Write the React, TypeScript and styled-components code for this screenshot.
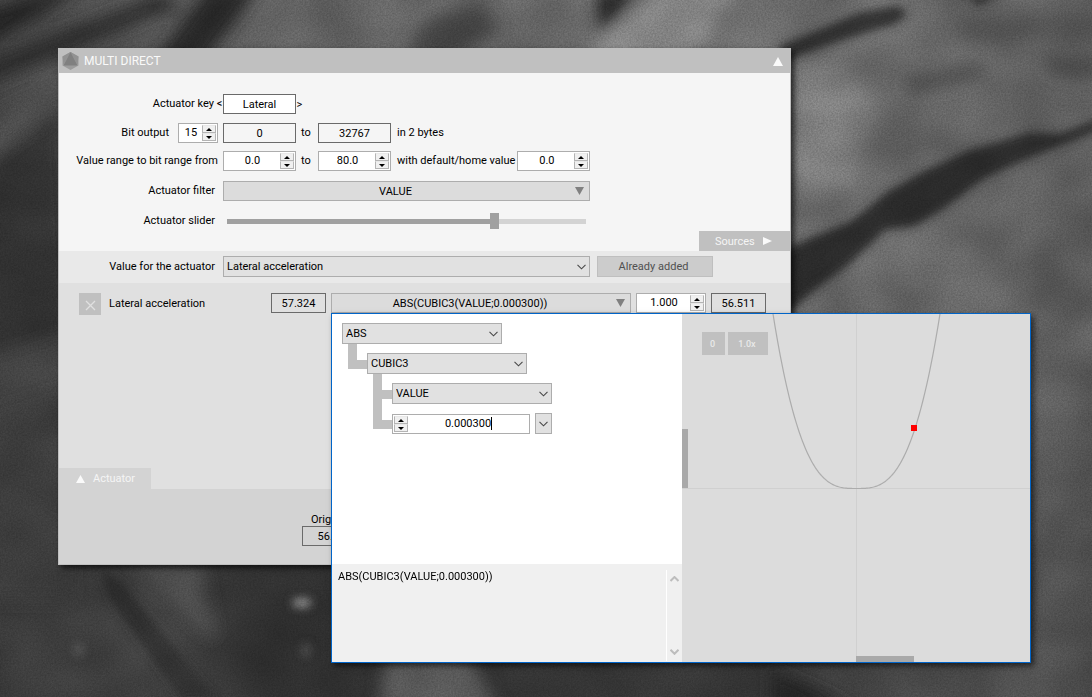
import React, { useState } from "react";
import styled, { createGlobalStyle } from "styled-components";

const color = {
  bar: "#c0c0c0",
  panel: "#f5f5f5",
  strip: "#e9e9e9",
  list: "#e0e0e0",
  footer: "#d3d3d3",
  control: "#dcdcdc",
  select: "#e1e1e1",
  line: "#adadad",
  dark: "#6a6a6a",
  focus: "#0064c8",
};

const Global = createGlobalStyle`
  *, *::before, *::after { box-sizing: border-box; }
  body { margin: 0; background: #464646; }
  body, button, input, select, textarea {
    font-family: Roboto, "Liberation Sans", sans-serif;
    font-size: 11px;
    color: #000;
  }
  button, input, select, textarea { margin: 0; padding: 0; border-radius: 0; outline: none; }
`;

/* ---------- desktop ---------- */

const Desktop = styled.main`
  position: relative;
  min-height: 100vh;
  overflow: hidden;
`;

const WallpaperSvg = styled.svg`
  position: absolute;
  inset: 0;
  width: 100%;
  height: 100%;
`;

const Texture = styled.rect`
  mix-blend-mode: overlay;
`;

/* ---------- main window ---------- */

const Window = styled.section`
  position: absolute;
  left: 58px;
  top: 48px;
  width: 733px;
  display: flex;
  flex-direction: column;
  border: 1px solid ${color.bar};
  box-shadow: 3px 3px 6px rgba(0, 0, 0, 0.7);
`;

const TitleBar = styled.header`
  display: flex;
  align-items: center;
  gap: 5px;
  height: 24px;
  padding: 0 7px 0 3px;
  background: ${color.bar};
`;

const Title = styled.h1`
  flex: 1;
  margin: 0;
  font-size: 12px;
  font-weight: 400;
  color: #fafafa;
`;

const PlainButton = styled.button`
  display: flex;
  border: 0;
  background: none;
`;

const Settings = styled.div`
  display: flex;
  flex-direction: column;
  padding-top: 21px;
  background: ${color.panel};
`;

const Row = styled.div<{ $gap?: number }>`
  display: flex;
  align-items: center;
  height: 20px;
  margin-bottom: ${(p) => p.$gap ?? 0}px;
`;

const LabelCell = styled.div<{ $end?: number }>`
  display: flex;
  justify-content: flex-end;
  align-items: center;
  width: 164px;
  padding-right: ${(p) => p.$end ?? 8}px;
  line-height: 18px;
  white-space: nowrap;
`;

const BitLabel = styled.label`
  padding-right: 9px;
`;

const Bracket = styled.span`
  width: 7px;
  text-align: center;
`;

const After = styled.span`
  padding: 0 2px 0 6px;
  line-height: 18px;
  white-space: nowrap;
`;

const To = styled.span`
  width: 22px;
  padding-left: 5px;
  line-height: 18px;
`;

const KeyInput = styled.input`
  width: 73px;
  height: 20px;
  border: 1px solid ${color.dark};
  background: #fff;
  text-align: center;
`;

const Readout = styled.output<{ $width: number }>`
  flex: none;
  width: ${(p) => p.$width}px;
  height: 20px;
  border: 1px solid ${color.dark};
  line-height: 20px;
  text-align: center;
`;

const SpinBox = styled.div<{ $width: number; $reverse?: boolean }>`
  position: relative;
  flex: none;
  display: flex;
  flex-direction: ${(p) => (p.$reverse ? "row-reverse" : "row")};
  width: ${(p) => p.$width}px;
  height: 20px;
  padding: 1px;
  border: 1px solid ${color.line};
  background: #fff;
`;

const SpinInput = styled.input`
  flex: 1;
  min-width: 0;
  height: 15px;
  border: 0;
  background: none;
  text-align: center;
`;

const SpinButtons = styled.div`
  display: flex;
  flex-direction: column;
  width: 14px;
`;

const SpinButton = styled.button`
  display: flex;
  align-items: center;
  justify-content: center;
  height: 8px;
  border: 1px solid #b4b4b4;
  border-top-color: #e8e8e8;
  background: #f0f0f0;
`;

const Caret = styled.span`
  position: absolute;
  left: 98px;
  top: 2px;
  width: 1px;
  height: 13px;
  background: #000;
`;

const FilterButton = styled.button<{ $width: number }>`
  flex: none;
  display: flex;
  align-items: center;
  gap: 8px;
  width: ${(p) => p.$width}px;
  height: 20px;
  padding-right: 5px;
  border: 1px solid ${color.line};
  background: ${color.control};
`;

const FilterText = styled.span`
  flex: 1;
  padding-top: 2px;
  text-align: center;
  line-height: 18px;
`;

const Slider = styled.input<{ $fill: number }>`
  appearance: none;
  width: 359px;
  height: 16px;
  margin-left: 4px;
  background: none;

  &::-webkit-slider-runnable-track {
    height: 5px;
    background: linear-gradient(
      to right,
      #a0a0a0 ${(p) => p.$fill}%,
      #d3d3d3 ${(p) => p.$fill}%
    );
  }

  &::-webkit-slider-thumb {
    appearance: none;
    width: 9px;
    height: 16px;
    margin-top: -6px;
    background: #a0a0a0;
  }
`;

const SourcesTab = styled.button`
  display: flex;
  align-items: center;
  justify-content: space-between;
  align-self: flex-end;
  width: 91px;
  height: 20px;
  padding: 0 18px 0 16px;
  border: 0;
  background: ${color.bar};
  color: #f5f5f5;
`;

const ValueStrip = styled.div`
  display: flex;
  align-items: center;
  height: 32px;
  padding-bottom: 1px;
  background: ${color.strip};
`;

const SelectWrap = styled.div<{ $width: number }>`
  position: relative;
  flex: none;
  width: ${(p) => p.$width}px;
  height: 21px;

  svg {
    position: absolute;
    right: 4px;
    top: 8px;
    pointer-events: none;
  }
`;

const SelectControl = styled.select`
  appearance: none;
  display: block;
  width: 100%;
  height: 100%;
  padding: 0 20px 0 3px;
  border: 1px solid ${color.line};
  background: ${color.select};
`;

const AddButton = styled.button`
  width: 116px;
  height: 21px;
  margin-left: 7px;
  padding-right: 3px;
  border: 1px solid #bfbfbf;
  background: #cccccc;
  color: #505050;
`;

const SourceList = styled.div`
  display: flex;
  flex-direction: column;
  padding-top: 10px;
  background: ${color.list};
`;

const SourceRow = styled.div`
  display: flex;
  align-items: flex-start;
  gap: 5px;
  height: 175px;
  padding-left: 20px;
`;

const RemoveButton = styled.button`
  display: flex;
  align-items: center;
  justify-content: center;
  width: 22px;
  height: 22px;
  padding-top: 2px;
  border: 0;
  background: ${color.bar};
`;

const SourceName = styled.span`
  width: 160px;
  padding-left: 3px;
  line-height: 22px;
`;

const ActuatorTab = styled.button`
  display: flex;
  align-items: center;
  gap: 8px;
  width: 92px;
  height: 21px;
  padding-left: 17px;
  border: 0;
  background: ${color.footer};
  color: #f5f5f5;
`;

const Footer = styled.footer`
  display: flex;
  height: 75px;
  padding: 24px 0 0 243px;
  background: ${color.footer};
`;

const FooterField = styled.label`
  display: flex;
  flex-direction: column;
  line-height: 13px;
`;

const FooterCaption = styled.span`
  padding-left: 9px;
`;

/* ---------- formula editor ---------- */

const Editor = styled.section`
  position: absolute;
  left: 331px;
  top: 313px;
  width: 700px;
  display: flex;
  border: 1px solid ${color.focus};
  box-shadow: 3px 3px 6px rgba(0, 0, 0, 0.6);
`;

const Formula = styled.div`
  flex: 1;
  display: flex;
  flex-direction: column;
  background: #fff;
`;

const Tree = styled.div`
  flex: 1;
  padding: 9px 10px;
`;

const Branch = styled.div`
  padding-left: 25px;
`;

const TreeRow = styled.div`
  display: flex;
  align-items: flex-end;
  height: 30px;
  margin-left: -19px;
`;

const Elbow = styled.span<{ $open?: boolean }>`
  width: 19px;
  height: 30px;
  background:
    linear-gradient(${color.bar}, ${color.bar}) 0 16px / 19px 9px no-repeat,
    linear-gradient(${color.bar}, ${color.bar}) 0 0 / 9px ${(p) => (p.$open ? 30 : 25)}px no-repeat;
`;

const DropButton = styled.button`
  display: flex;
  align-items: center;
  justify-content: center;
  width: 17px;
  height: 21px;
  margin-left: 5px;
  border: 1px solid ${color.line};
  background: ${color.select};
`;

const Expression = styled.div`
  display: flex;
  height: 98px;
  padding: 6px 0 1px;
  background: #f0f0f0;
`;

const ExpressionText = styled.textarea`
  flex: 1;
  padding: 0 6px;
  border: 0;
  background: none;
  line-height: 14px;
  resize: none;
  overflow: hidden;
`;

const ScrollRail = styled.div`
  display: flex;
  flex-direction: column;
  justify-content: space-between;
  align-items: center;
  width: 16px;
  padding: 6px 0 6px;
  border-left: 1px solid #fff;
`;

const Plot = styled.div`
  position: relative;
  width: 348px;
  height: 348px;
  background: ${color.control};
`;

const PlotButtons = styled.div`
  position: absolute;
  left: 20px;
  top: 18px;
  display: flex;
  gap: 3px;
`;

const PlotButton = styled.button<{ $width: number }>`
  width: ${(p) => p.$width}px;
  height: 23px;
  padding-right: 2px;
  border: 0;
  background: ${color.bar};
  color: #e9e9e9;
  font-size: 9px;
  font-weight: 500;
`;

/* ---------- drawings ---------- */

type Direction = "up" | "down" | "left" | "right";

function Triangle({ dir, w, h, fill }: { dir: Direction; w: number; h: number; fill: string }) {
  const points = {
    up: `0,${h} ${w / 2},0 ${w},${h}`,
    down: `0,0 ${w},0 ${w / 2},${h}`,
    left: `${w},0 ${w},${h} 0,${h / 2}`,
    right: `0,0 ${w},${h / 2} 0,${h}`,
  }[dir];
  return (
    <svg width={w} height={h} aria-hidden="true">
      <polygon points={points} fill={fill} />
    </svg>
  );
}

function Chevron({ up, stroke = "#484848", width = 1.1 }: { up?: boolean; stroke?: string; width?: number }) {
  return (
    <svg width="9" height="6" viewBox="0 0 9 6" aria-hidden="true">
      <path
        d={up ? "M0.5 5L4.5 1L8.5 5" : "M0.5 0.8L4.5 4.8L8.5 0.8"}
        fill="none"
        stroke={stroke}
        strokeWidth={width}
      />
    </svg>
  );
}

function Logo() {
  return (
    <svg width="17" height="18" viewBox="0 0 17 18" aria-hidden="true">
      <polygon points="8.5,0 16.5,4.5 16.5,13.5 8.5,18 0.5,13.5 0.5,4.5" fill="#9c9c9c" />
      <polygon points="8.5,0 16.5,4.5 15.5,13" fill="#929292" />
      <polygon points="8.5,0 0.5,4.5 1.5,13" fill="#929292" />
      <polygon points="8.5,0 15.5,13.5 1.5,13.5" fill="#808080" />
    </svg>
  );
}

function Wallpaper() {
  return (
    <WallpaperSvg viewBox="0 0 1092 697" preserveAspectRatio="xMidYMid slice" aria-hidden="true">
      <defs>
        <linearGradient id="top" x1="0" y1="0" x2="1" y2="0">
          <stop offset="0" stopColor="#484848" />
          <stop offset="0.25" stopColor="#626262" />
          <stop offset="0.6" stopColor="#6a6a6a" />
          <stop offset="0.78" stopColor="#6a6a6a" />
          <stop offset="1" stopColor="#5e5e5e" />
        </linearGradient>
        <linearGradient id="low" x1="0" y1="0" x2="1" y2="0">
          <stop offset="0" stopColor="#383838" />
          <stop offset="0.13" stopColor="#424242" />
          <stop offset="0.26" stopColor="#2e2e2e" />
          <stop offset="0.7" stopColor="#383838" />
          <stop offset="0.95" stopColor="#505050" />
          <stop offset="1" stopColor="#4c4c4c" />
        </linearGradient>
        <linearGradient id="fade" x1="0" y1="0" x2="0" y2="1">
          <stop offset="0.5" stopColor="#fff" stopOpacity="0" />
          <stop offset="0.82" stopColor="#fff" stopOpacity="1" />
        </linearGradient>
        <mask id="lower">
          <rect width="1092" height="697" fill="url(#fade)" />
        </mask>
        <filter id="soft" x="-30%" y="-30%" width="160%" height="160%">
          <feGaussianBlur stdDeviation="8" />
        </filter>
        <filter id="edge" x="-30%" y="-30%" width="160%" height="160%">
          <feGaussianBlur stdDeviation="4" />
        </filter>
        <filter id="grain" x="0" y="0" width="100%" height="100%" colorInterpolationFilters="sRGB">
          <feTurbulence type="fractalNoise" baseFrequency="0.6" numOctaves="2" seed="4" />
          <feColorMatrix values="1 0 0 0 0  1 0 0 0 0  1 0 0 0 0  0 0 0 0 1" />
        </filter>
        <filter id="cloud" x="0" y="0" width="100%" height="100%" colorInterpolationFilters="sRGB">
          <feTurbulence type="fractalNoise" baseFrequency="0.014 0.018" numOctaves="2" seed="9" />
          <feColorMatrix values="1.6 0 0 0 -0.3  1.6 0 0 0 -0.3  1.6 0 0 0 -0.3  0 0 0 0 1" />
        </filter>
      </defs>
      <rect width="1092" height="697" fill="url(#top)" />
      <rect width="1092" height="697" fill="url(#low)" mask="url(#lower)" />
      <g filter="url(#soft)">
        <path d="M-20 90L-20 62L160 -5L180 5Z" fill="#2a2a2a" />
        <path d="M-20 50L-20 15L50 -10L80 -10Z" fill="#282828" />
        <path d="M140 80L210 -15L262 -15L190 80Z" fill="#262626" />
        <path d="M-20 120L58 90L70 330L-20 360Z" fill="#2c2c2c" opacity="0.8" />
        <path d="M-20 130L60 85V110L-20 165Z" fill="#5a5a5a" opacity="0.7" />
        <path d="M-20 360L70 330V410L-20 430Z" fill="#404040" opacity="0.8" />
        <path d="M-20 410L70 380V600H-20Z" fill="#3c3c3c" />
        <path d="M400 60L430 15L480 5L500 30L450 60Z" fill="#444" />
        <path d="M595 -10H640L600 35Z" fill="#242424" />
        <path d="M570 70L660 -10H735L690 70Z" fill="#888" />
        <path d="M790 60L840 60L880 110L850 190L790 200Z" fill="#7a7a7a" />
        <path d="M905 80L980 65L990 75L910 95Z" fill="#4a4a4a" />
        <path d="M960 15H1100V30L960 42Z" fill="#525252" />
        <path d="M1045 58L1100 56V78L1050 74Z" fill="#444" />
        <path d="M1040 190L1100 150V330L1030 310Z" fill="#585858" />
        <path d="M385 650H465L500 710H380Z" fill="#585858" />
        <path d="M130 560H200L215 640L170 600Z" fill="#505050" />
        <path d="M770 668L820 690L860 710H770Z" fill="#262626" />
      </g>
      <g filter="url(#edge)">
        <path d="M780 46L860 12L898 6L908 14L895 24L850 38L780 62Z" fill="#2e2e2e" />
        <path d="M965 -8H1005L978 6Z" fill="#303030" />
        <path d="M780 252L810 238L850 222L890 190L930 168L970 150L1030 132L1060 134L1100 118V130L1060 146L1020 162L985 178L945 208L915 226L885 230L850 264L815 290L780 320Z" fill="#2b2b2b" />
        <path d="M100 570L120 580L215 697H180L110 600Z" fill="#2e2e2e" />
        <ellipse cx="302" cy="603" rx="10" ry="5" fill="#8a8a8a" />
        <ellipse cx="306" cy="650" rx="5" ry="7" fill="#4a4a4a" />
        <ellipse cx="79" cy="650" rx="5" ry="6" fill="#585858" />
      </g>
      <Texture width="1092" height="697" filter="url(#cloud)" opacity="0.12" />
      <Texture width="1092" height="697" filter="url(#grain)" opacity="0.16" />
    </WallpaperSvg>
  );
}

const CENTER = 174;
const gain = 0.0003;
const curve = Array.from({ length: 173 }, (_, i) => i - 86)
  .map((x) => `${CENTER + x + 0.5},${CENTER + 0.5 - gain * Math.abs(x) ** 3}`)
  .join(" ");

function CurvePlot() {
  return (
    <svg width="348" height="348" viewBox="0 0 348 348" role="img" aria-label="Filter curve">
      <path d="M0 174.5H348M174.5 0V348" stroke="#d0d0d0" />
      <polyline points={curve} fill="none" stroke="#acacac" strokeWidth="1.2" />
      <path d="M0 115h6v59h-6zM174 342h58v6h-58z" fill="#a9a9a9" />
      <rect x="229" y="111" width="6" height="6" fill="#f00" />
    </svg>
  );
}

/* ---------- controls ---------- */

function Spinner({
  id,
  label,
  initial,
  width,
  reverse,
  caret,
}: {
  id: string;
  label?: string;
  initial: string;
  width: number;
  reverse?: boolean;
  caret?: boolean;
}) {
  const [value, setValue] = useState(initial);
  const digits = (initial.split(".")[1] ?? "").length;
  const step = (dir: number) => setValue((Number(value) + dir * 10 ** -digits).toFixed(digits));
  return (
    <SpinBox $width={width} $reverse={reverse}>
      <SpinInput id={id} aria-label={label} value={value} onChange={(e) => setValue(e.target.value)} />
      {caret && <Caret />}
      <SpinButtons>
        <SpinButton type="button" aria-label="Increase" onClick={() => step(1)}>
          <Triangle dir="up" w={6} h={3} fill="#000" />
        </SpinButton>
        <SpinButton type="button" aria-label="Decrease" onClick={() => step(-1)}>
          <Triangle dir="down" w={6} h={3} fill="#000" />
        </SpinButton>
      </SpinButtons>
    </SpinBox>
  );
}

function Select({ id, label, value, width }: { id?: string; label?: string; value: string; width: number }) {
  return (
    <SelectWrap $width={width}>
      <SelectControl id={id} aria-label={label} defaultValue={value}>
        <option>{value}</option>
      </SelectControl>
      <Chevron />
    </SelectWrap>
  );
}

function FilterPicker({ id, label, value, width }: { id?: string; label?: string; value: string; width: number }) {
  return (
    <FilterButton type="button" id={id} aria-label={label} $width={width}>
      <FilterText>{value}</FilterText>
      <Triangle dir="down" w={9} h={8} fill="#808080" />
    </FilterButton>
  );
}

/* ---------- page ---------- */

export default function App() {
  const [slider, setSlider] = useState(751);
  const [key, setKey] = useState("Lateral");
  const [expression, setExpression] = useState("ABS(CUBIC3(VALUE;0.000300))");

  return (
    <>
      <Global />
      <Desktop>
        <Wallpaper />

        <Window>
          <TitleBar>
            <Logo />
            <Title>MULTI DIRECT</Title>
            <PlainButton type="button" aria-label="Collapse">
              <Triangle dir="up" w={10} h={9} fill="#fafafa" />
            </PlainButton>
          </TitleBar>

          <Settings>
            <Row $gap={9}>
              <LabelCell $end={0}>
                <After as="label" htmlFor="key">Actuator key</After>
                <Bracket>&lt;</Bracket>
              </LabelCell>
              <KeyInput id="key" value={key} onChange={(e) => setKey(e.target.value)} />
              <Bracket>&gt;</Bracket>
            </Row>
            <Row $gap={8}>
              <LabelCell $end={5}>
                <BitLabel htmlFor="bits">Bit output</BitLabel>
                <Spinner id="bits" initial="15" width={40} />
              </LabelCell>
              <Readout $width={73}>0</Readout>
              <To>to</To>
              <Readout $width={73}>32767</Readout>
              <After>in 2 bytes</After>
            </Row>
            <Row $gap={10}>
              <LabelCell $end={5}>
                <label htmlFor="from">Value range to bit range from</label>
              </LabelCell>
              <Spinner id="from" initial="0.0" width={73} />
              <To as="label" htmlFor="until">to</To>
              <Spinner id="until" initial="80.0" width={73} />
              <After as="label" htmlFor="home">with default/home value</After>
              <Spinner id="home" initial="0.0" width={73} />
            </Row>
            <Row $gap={10}>
              <LabelCell>
                <label htmlFor="filter">Actuator filter</label>
              </LabelCell>
              <FilterPicker id="filter" value="VALUE" width={367} />
            </Row>
            <Row>
              <LabelCell>
                <label htmlFor="slider">Actuator slider</label>
              </LabelCell>
              <Slider
                id="slider"
                type="range"
                min={0}
                max={1000}
                value={slider}
                $fill={slider / 10}
                onChange={(e) => setSlider(Number(e.target.value))}
              />
            </Row>
            <SourcesTab type="button">
              Sources
              <Triangle dir="right" w={9} h={8} fill="#fafafa" />
            </SourcesTab>
          </Settings>

          <ValueStrip>
            <LabelCell>
              <label htmlFor="value">Value for the actuator</label>
            </LabelCell>
            <Select id="value" value="Lateral acceleration" width={367} />
            <AddButton type="button">Already added</AddButton>
          </ValueStrip>

          <SourceList>
            <SourceRow>
              <RemoveButton type="button" aria-label="Remove source">
                <svg width="11" height="11" aria-hidden="true">
                  <path d="M1 1L10 10M10 1L1 10" stroke="#e0e0e0" strokeWidth="1.3" />
                </svg>
              </RemoveButton>
              <SourceName>Lateral acceleration</SourceName>
              <Readout $width={55}>57.324</Readout>
              <FilterPicker label="Source filter" value="ABS(CUBIC3(VALUE;0.000300))" width={300} />
              <Spinner id="factor" label="Factor" initial="1.000" width={70} />
              <Readout $width={55}>56.511</Readout>
            </SourceRow>
            <ActuatorTab type="button">
              <Triangle dir="up" w={9} h={8} fill="#fafafa" />
              Actuator
            </ActuatorTab>
          </SourceList>

          <Footer>
            <FooterField>
              <FooterCaption>Original</FooterCaption>
              <Readout $width={65}>56.511</Readout>
            </FooterField>
          </Footer>
        </Window>

        <Editor>
          <Formula>
            <Tree>
              <Select label="Function" value="ABS" width={160} />
              <Branch>
                <TreeRow>
                  <Elbow />
                  <Select label="Argument of ABS" value="CUBIC3" width={160} />
                </TreeRow>
                <Branch>
                  <TreeRow>
                    <Elbow $open />
                    <Select label="First argument of CUBIC3" value="VALUE" width={160} />
                  </TreeRow>
                  <TreeRow>
                    <Elbow />
                    <Spinner
                      id="cubic"
                      label="Second argument of CUBIC3"
                      initial="0.000300"
                      width={138}
                      reverse
                      caret
                    />
                    <DropButton type="button" aria-label="Replace value">
                      <Chevron />
                    </DropButton>
                  </TreeRow>
                </Branch>
              </Branch>
            </Tree>
            <Expression>
              <ExpressionText
                aria-label="Expression"
                value={expression}
                onChange={(e) => setExpression(e.target.value)}
              />
              <ScrollRail>
                <Chevron up stroke="#bdbdbd" width={2} />
                <Chevron stroke="#bdbdbd" width={2} />
              </ScrollRail>
            </Expression>
          </Formula>
          <Plot>
            <CurvePlot />
            <PlotButtons>
              <PlotButton type="button" $width={23}>0</PlotButton>
              <PlotButton type="button" $width={40}>1.0x</PlotButton>
            </PlotButtons>
          </Plot>
        </Editor>
      </Desktop>
    </>
  );
}
